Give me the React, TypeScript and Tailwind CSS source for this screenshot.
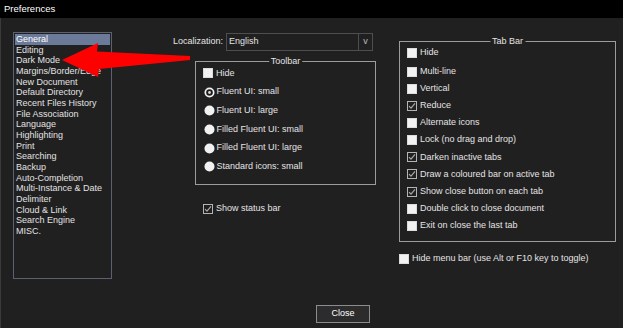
import React from "react";

const categories = [
  "General", "Editing", "Dark Mode", "Margins/Border/Edge", "New Document", "Default Directory",
  "Recent Files History", "File Association", "Language", "Highlighting", "Print", "Searching",
  "Backup", "Auto-Completion", "Multi-Instance & Date", "Delimiter", "Cloud & Link", "Search Engine", "MISC.",
];

const toolbarIcons = ["Fluent UI: small", "Fluent UI: large", "Filled Fluent UI: small", "Filled Fluent UI: large", "Standard icons: small"];

const tabBar: [string, boolean][] = [
  ["Multi-line", false],
  ["Vertical", false],
  ["Reduce", true],
  ["Alternate icons", false],
  ["Lock (no drag and drop)", false],
  ["Darken inactive tabs", true],
  ["Draw a coloured bar on active tab", true],
  ["Show close button on each tab", true],
  ["Double click to close document", false],
  ["Exit on close the last tab", false],
];

const CheckBox: React.FC<{ checked?: boolean }> = ({ checked }) =>
  checked ? (
    <span className="w-[10px] h-[10px] shrink-0 border border-[#b4b4b4] bg-[#202020] flex items-center justify-center">
      <svg width="8" height="8" viewBox="0 0 8 8">
        <path d="M1 4.2 L3 6.2 L7 1.4" fill="none" stroke="#a8a8a8" strokeWidth="1.2" />
      </svg>
    </span>
  ) : (
    <span className="w-[10px] h-[10px] shrink-0 bg-[#f2f2f2] border border-[#dcdcdc]" />
  );

const Radio: React.FC<{ checked?: boolean }> = ({ checked }) => (
  <svg width="11" height="11" viewBox="0 0 11 11" className="shrink-0">
    <circle cx="5.5" cy="5.5" r="5" fill="#f2f2f2" />
    {checked && <circle cx="5.5" cy="5.5" r="3.3" fill="#1c1c1c" />}
    {checked && <circle cx="5.5" cy="5.5" r="1.4" fill="#d8d8d8" />}
  </svg>
);

const Group: React.FC<{ title: string; className: string; children: React.ReactNode }> = ({ title, className, children }) => (
  <div className={`relative border border-[#9c9c9c] ${className}`}>
    <span className="absolute top-[-6px] left-1/2 -translate-x-1/2 bg-[#202020] px-[2px] leading-[10px] text-[#e4e4e4]">{title}</span>
    {children}
  </div>
);

const App: React.FC = () => {
  return (
    <div
      className="relative w-[623px] h-[328px] bg-[#202020] flex flex-col overflow-hidden text-[9px] text-[#e4e4e4]"
      style={{ fontFamily: '"Liberation Sans", Arial, sans-serif' }}
    >
      <div className="h-[18px] bg-black text-white pl-[4px] flex items-center text-[9.5px]">Preferences</div>

      <div className="flex-1 flex flex-col border-l border-[#3a3a3a]">
        <div className="flex pl-[12px] pt-[14px]">
          {/* category list */}
          <div className="w-[99px] h-[247px] border border-[#5b6172] p-[1px] shrink-0">
            {categories.map((c, i) => (
              <div
                key={c}
                className={`h-[10.67px] leading-[10.67px] pl-[1px] whitespace-nowrap ${i === 0 ? "bg-[#6b7a99] text-white" : "text-[#e2e2e2]"}`}
              >
                {c}
              </div>
            ))}
          </div>

          {/* middle column */}
          <div className="ml-[61px] w-[203px] flex flex-col">
            <div className="mt-[1px] h-[18px] flex items-center">
              <span className="w-[53px]">Localization:</span>
              <div className="w-[147px] h-[18px] border border-[#4e4e4e] flex items-stretch">
                <span className="flex-1 pl-[2px] flex items-center">English</span>
                <span className="w-[14px] border-l border-[#4e4e4e] flex items-center justify-center text-[#bdbdbd]">v</span>
              </div>
            </div>

            <Group title="Toolbar" className="mt-[10px] ml-[22px] w-[181px] h-[124px] pt-[2px] pl-[7px]">
              <div className="h-[18.7px] flex items-center gap-[3px]">
                <CheckBox />
                <span>Hide</span>
              </div>
              {toolbarIcons.map((t, i) => (
                <div key={t} className="h-[18.7px] flex items-center gap-[2px] pl-[0.5px]">
                  <Radio checked={i === 0} />
                  <span>{t}</span>
                </div>
              ))}
            </Group>

            <div className="mt-[18px] ml-[30px] h-[12px] flex items-center gap-[3px]">
              <CheckBox checked />
              <span>Show status bar</span>
            </div>
          </div>

          {/* right column */}
          <div className="ml-[23px] flex flex-col">
            <Group title="Tab Bar" className="mt-[9px] w-[217px] h-[201px] pt-[2px] pl-[7px]">
              <div className="h-[17.14px] mb-[2px] flex items-center gap-[3px]">
                <CheckBox />
                <span>Hide</span>
              </div>
              {tabBar.map(([t, c]) => (
                <div key={t} className="h-[17.14px] flex items-center gap-[3px]">
                  <CheckBox checked={c} />
                  <span>{t}</span>
                </div>
              ))}
            </Group>

            <div className="mt-[11px] h-[12px] flex items-center gap-[3px]">
              <CheckBox />
              <span>Hide menu bar (use Alt or F10 key to toggle)</span>
            </div>
          </div>
        </div>

        <button className="mt-auto mb-[5px] ml-[315px] w-[54px] h-[18px] border border-[#8c8c8c] bg-[#2c2c2c] text-white text-[9px] flex items-center justify-center">
          Close
        </button>
      </div>

      {/* red annotation arrow */}
      <svg className="absolute inset-0 pointer-events-none" width="623" height="328" viewBox="0 0 623 328">
        <polygon points="62,60 98,43 97,51.5 190,56 190,60 99,69 98,77" fill="#ff0000" />
      </svg>
    </div>
  );
};

export default App;
